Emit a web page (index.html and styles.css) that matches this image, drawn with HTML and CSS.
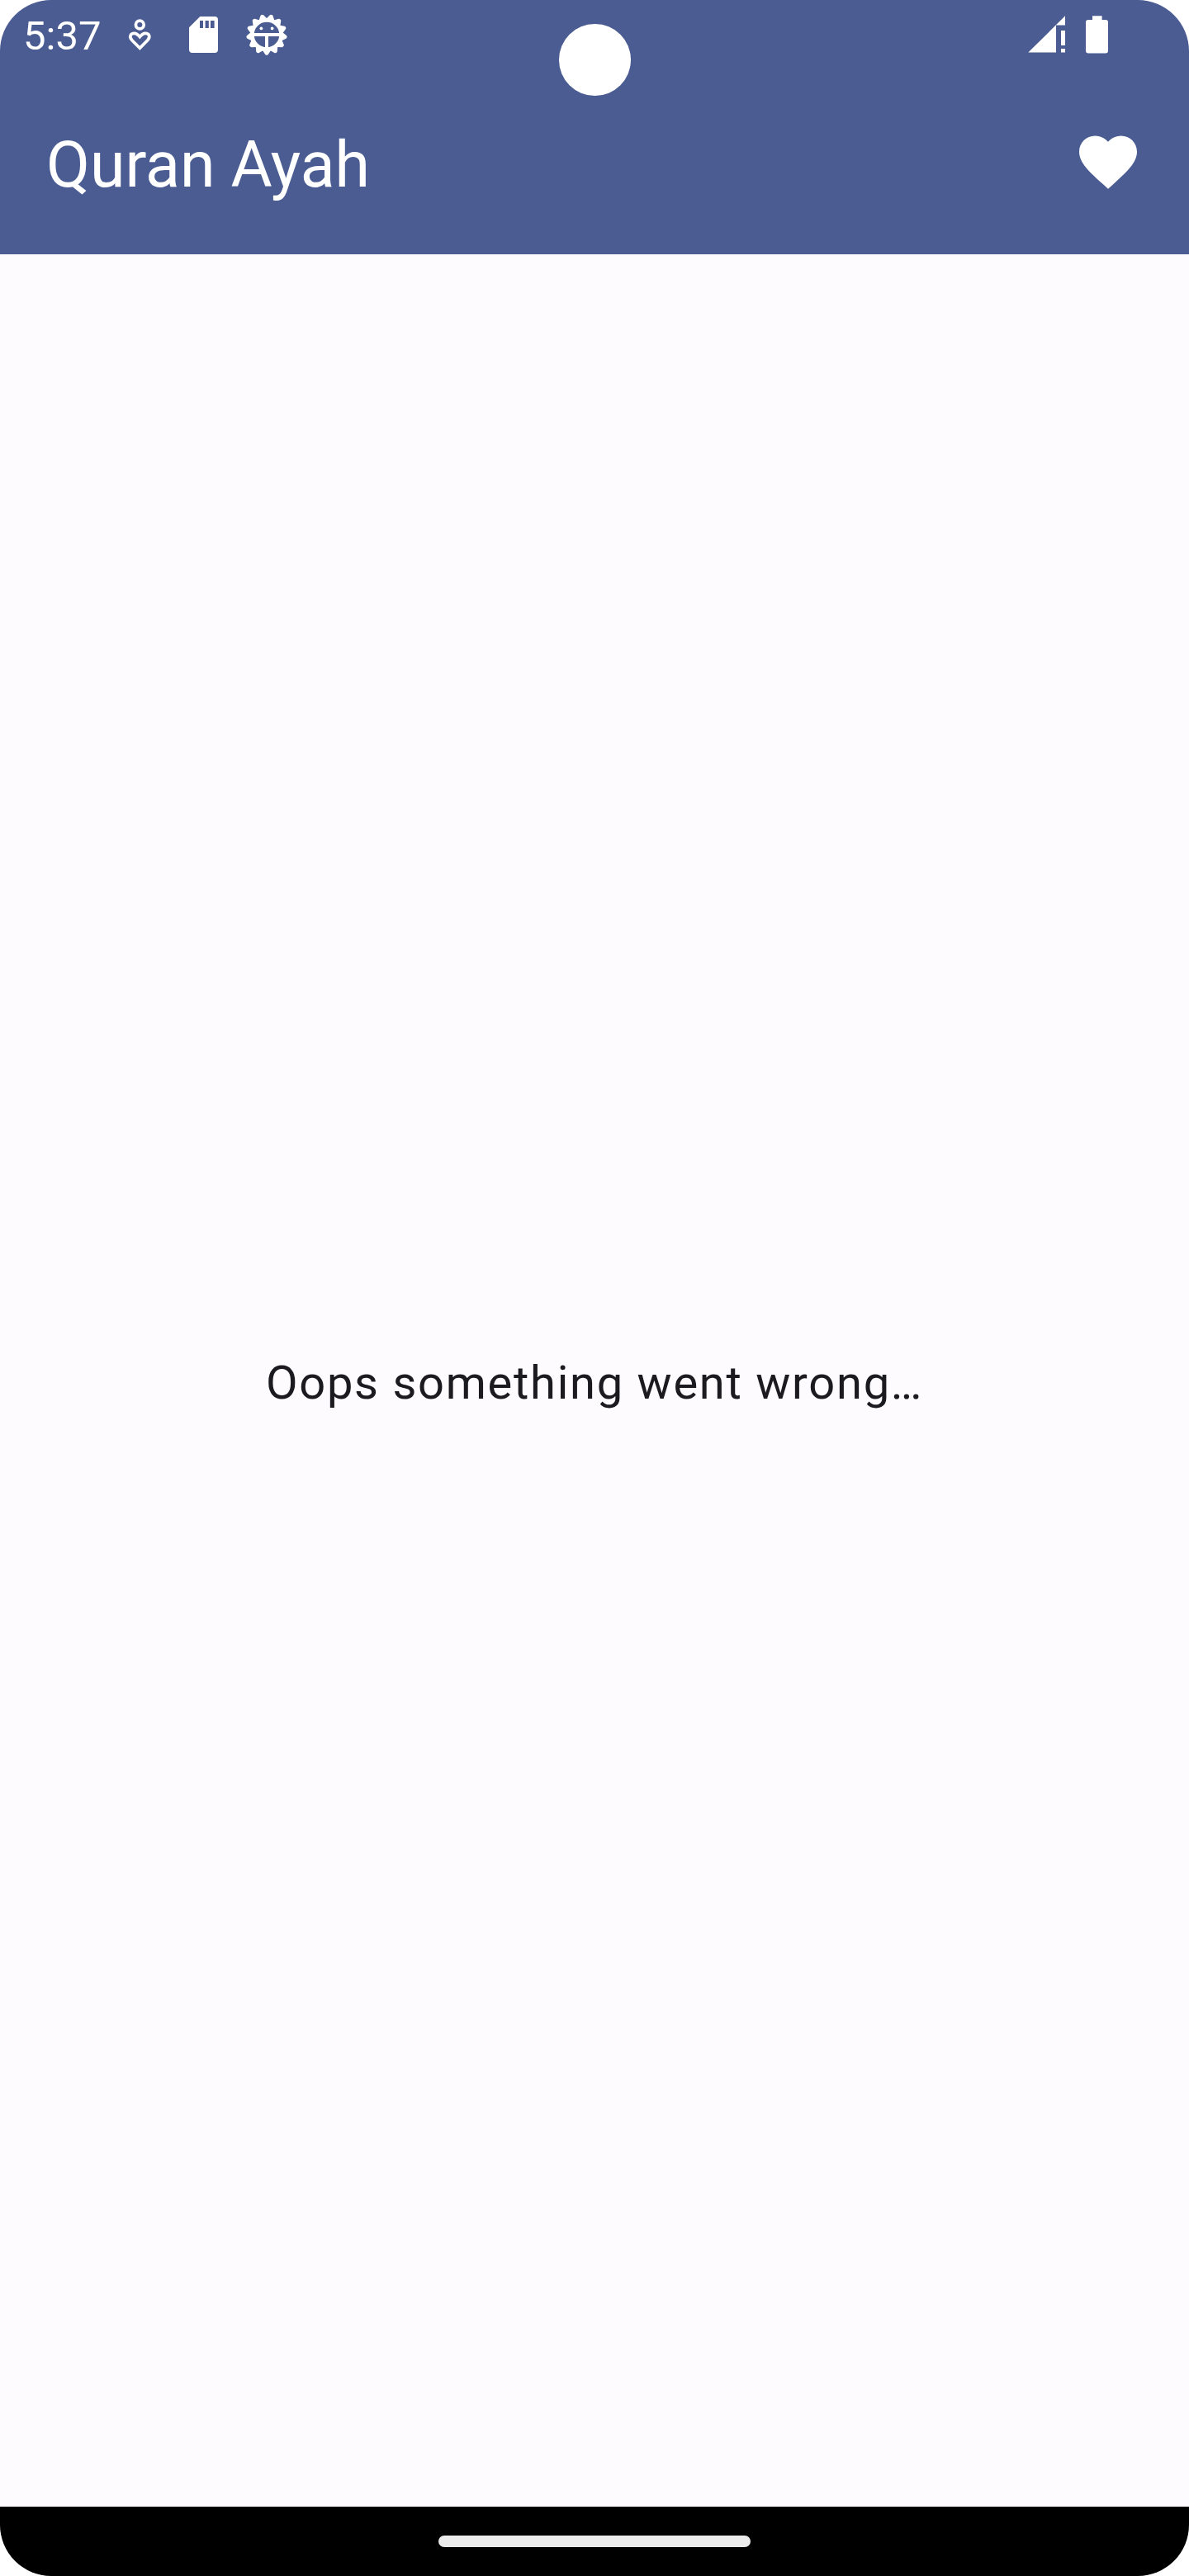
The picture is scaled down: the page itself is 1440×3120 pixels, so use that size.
FILE: index.html
```html
<!DOCTYPE html>
<html lang="en">
<head>
<meta charset="utf-8">
<title>Quran Ayah</title>
<link rel="stylesheet" href="styles.css">
</head>
<body>
<div class="screen">
  <header class="top">
    <div class="status">
      <span class="clock">5:37</span>
      <svg class="icon-care" width="32" height="44" viewBox="153 20 32 44" fill="none" stroke="#fff" stroke-width="3.7">
        <circle cx="169.3" cy="30" r="4.9"/>
        <path d="M169.3 58.3L160.1 49C155.6 44.2 158.3 40.3 162.7 40.3C165.7 40.3 168 43 169.3 44.6C170.6 43 172.9 40.3 175.9 40.3C180.3 40.3 183 44.2 178.5 49Z"/>
      </svg>
      <svg class="icon-sd" width="36" height="45" viewBox="229 20 36 45" fill="#fff" fill-rule="evenodd">
        <path d="M242.3 20H260Q264 20 264 24V60Q264 64 260 64H233Q229 64 229 60V33.2ZM242 25V34H246V25ZM248.6 25V34H252.8V25ZM255 25V34H259.6V25Z"/>
      </svg>
      <svg class="icon-bug" width="52" height="52" viewBox="-26 -26 52 52" fill="none" stroke="#fff">
        <defs><path id="tooth" d="M-3.2 18.5L-.4 22.9H.4L3.2 18.5Z"/></defs>
        <circle r="17.6" stroke-width="4.6"/>
        <g fill="#fff" stroke-width="3.6" stroke-linejoin="round">
          <use href="#tooth"/>
          <use href="#tooth" transform="rotate(27.69)"/>
          <use href="#tooth" transform="rotate(55.38)"/>
          <use href="#tooth" transform="rotate(83.08)"/>
          <use href="#tooth" transform="rotate(110.77)"/>
          <use href="#tooth" transform="rotate(138.46)"/>
          <use href="#tooth" transform="rotate(166.15)"/>
          <use href="#tooth" transform="rotate(193.85)"/>
          <use href="#tooth" transform="rotate(221.54)"/>
          <use href="#tooth" transform="rotate(249.23)"/>
          <use href="#tooth" transform="rotate(276.92)"/>
          <use href="#tooth" transform="rotate(304.62)"/>
          <use href="#tooth" transform="rotate(332.31)"/>
        </g>
        <path d="M-17 0H17M0 0V17" stroke-width="4"/>
        <g fill="#fff" stroke="none"><circle cx="-6.6" cy="-7.6" r="1.9"/><circle cx="6.6" cy="-7.6" r="1.9"/></g>
      </svg>
      <svg class="icon-signal" width="45" height="45" viewBox="1245 19 45 45" fill="#fff">
        <path d="M1245.3 63.6L1290 19.3V30.6H1279V63.6ZM1285 37H1290V55H1285ZM1285 59H1290V63.6H1285Z"/>
      </svg>
      <svg class="icon-battery" width="27" height="46" viewBox="1315 19 27 46" fill="#fff">
        <path d="M1323 19.3H1334.6V24H1339Q1342 24 1342 27V61.5Q1342 64.5 1339 64.5H1318Q1315 64.5 1315 61.5V27Q1315 24 1318 24H1323Z"/>
      </svg>
    </div>
    <div class="appbar">
      <h1 class="title">Quran Ayah</h1>
      <svg class="heart" width="84" height="84" viewBox="0 0 24 24" fill="#fff">
        <path d="M12 21.35l-1.45-1.32C5.4 15.36 2 12.28 2 8.5 2 5.42 4.42 3 7.5 3c1.74 0 3.41.81 4.5 2.09C13.09 3.81 14.76 3 16.5 3 19.58 3 22 5.42 22 8.5c0 3.78-3.4 6.86-8.55 11.54L12 21.35z"/>
      </svg>
    </div>
    <div class="camera"></div>
  </header>
  <main class="content"><p class="message">Oops something went wrong…</p></main>
  <footer class="nav"><div class="pill"></div></footer>
</div>
</body>
</html>
```
FILE: styles.css
```css
* { box-sizing: border-box; margin: 0; padding: 0; }
body { background: #fff; font-family: Roboto, sans-serif; }
svg { display: block; flex: none; }
.screen {
  width: 1440px; height: 3120px; display: flex; flex-direction: column;
  border-radius: 62px; overflow: hidden; background: #fefbff;
}
.top { position: relative; height: 308px; background: #4a5c92; color: #fff; }
.status { height: 84px; display: flex; align-items: flex-start; padding-left: 28px; }
.clock { width: 125px; padding-top: 15px; font-size: 49px; line-height: 58px; }
.icon-care { margin-top: 20px; }
.icon-sd { margin: 20px 0 0 44px; }
.icon-bug { margin: 16px 0 0 32px; }
.icon-signal { margin: 19px 0 0 896px; }
.icon-battery { margin: 19px 0 0 25px; }
.appbar {
  height: 224px; display: flex; justify-content: space-between;
  align-items: center; padding: 0 56px;
}
.title { font-size: 77px; font-weight: 400; line-height: 98px; padding-top: 7px; }
.camera {
  position: absolute; left: 677px; top: 29px; width: 86.5px; height: 86.5px;
  border-radius: 50%; background: #fff;
}
.content { flex: 1; display: flex; align-items: center; justify-content: center; }
.message { padding-top: 6px; font-size: 56px; line-height: 84px; letter-spacing: 1.75px; color: #1b1b1f; }
.nav { height: 84px; background: #000; display: flex; align-items: center; justify-content: center; }
.pill { width: 378px; height: 14px; border-radius: 7px; background: #ebebeb; }
```
